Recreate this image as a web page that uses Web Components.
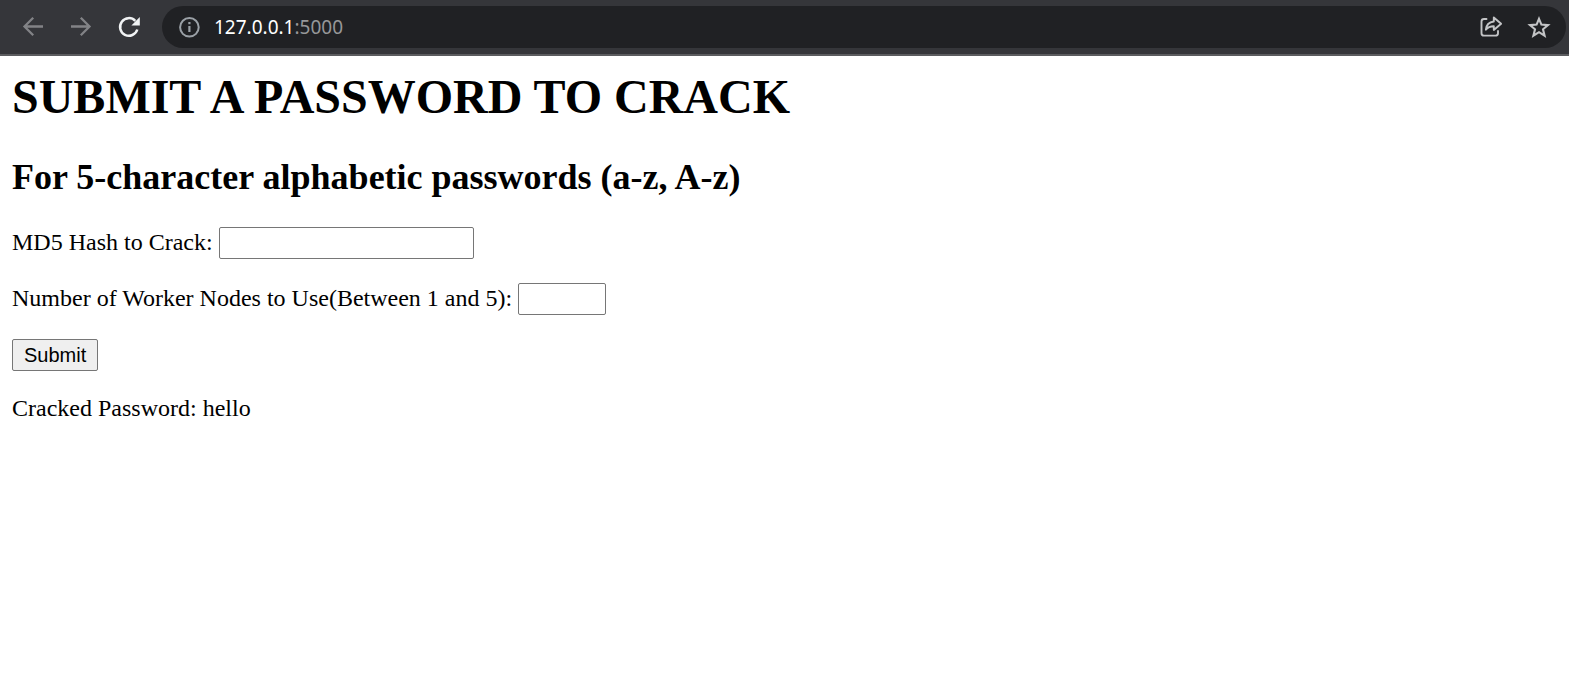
<!DOCTYPE html>
<html lang="en">
<head>
<meta charset="utf-8">
<meta name="viewport" content="width=device-width, initial-scale=1">
<title>Submit a password to crack</title>
<style>
  body { margin: 0; background: #fff; color: #000; font: 24px/26px "Liberation Serif", "Times New Roman", serif; }
</style>
</head>
<body>
<browser-bar>
  <span slot="host">127.0.0.1</span><span slot="port">:5000</span>
</browser-bar>
<crack-page>
  <span slot="title">SUBMIT A PASSWORD TO CRACK</span>
  <span slot="subtitle">For 5-character alphabetic passwords (a-z, A-z)</span>
  <crack-form></crack-form>
  <crack-result>hello</crack-result>
</crack-page>

<script>
const define = (name, html) => {
  const template = document.createElement('template');
  template.innerHTML = html;
  customElements.define(name, class extends HTMLElement {
    constructor() {
      super();
      this.attachShadow({ mode: 'open' }).append(template.content.cloneNode(true));
    }
  });
};

define('browser-bar', `
  <style>
    :host { display: flex; align-items: center; padding: 6px 3px 6px 21px; background: #35363a;
      border-bottom: 2px solid #5b5c5f; font: 19px/28px "Noto Sans", "Open Sans", sans-serif; }
    button { display: block; flex: none; width: 24px; height: 24px; padding: 0; border: 0; background: none; color: #c3c4c6; }
    button:disabled { color: #828386; }
    svg { display: block; width: 24px; height: 24px; fill: none; stroke: currentColor; stroke-width: 2; }
    nav { display: flex; gap: 24px; margin-right: 21px; }
    .reload { color: #f1f3f4; }
    .address { flex: 1; display: flex; align-items: center; box-sizing: border-box; height: 42px;
      padding: 0 15px; border-radius: 21px; background: #202124; }
    .info { color: #9aa0a6; margin-right: 13px; }
    .url { flex: 1; display: flex; color: #fff; }
    .port { color: #969799; }
    .actions { display: flex; gap: 24px; }
  </style>
  <nav aria-label="History">
    <button disabled aria-label="Back"><svg viewBox="0 0 24 24"><path stroke-width="2.300" d="M22 11.500H3.500M12.200 2.800L3.500 11.500l8.700 8.700"/></svg></button>
    <button disabled aria-label="Forward"><svg viewBox="0 0 24 24"><path stroke-width="2.300" d="M2 11.500h18.500M11.800 2.800l8.700 8.700-8.700 8.700"/></svg></button>
    <button class="reload" aria-label="Reload"><svg viewBox="0 0 24 24"><path stroke-width="2.500" d="M20.300 14.500A8.800 8.800 0 1 1 18.300 5.900"/><path d="M22.800 2v8.400h-8.400z" fill="currentColor" stroke="none"/></svg></button>
  </nav>
  <div class="address">
    <button class="info" aria-label="Site information"><svg viewBox="0 0 24 24"><circle cx="12.400" cy="12.300" r="9.300"/><path d="M12.400 11v6" stroke-width="2.200"/><path d="M12.400 7v2.200" stroke-width="2.200"/></svg></button>
    <div class="url"><slot name="host"></slot><span class="port"><slot name="port"></slot></span></div>
    <div class="actions">
      <button aria-label="Share"><svg viewBox="0 0 24 24" stroke-linejoin="round"><path stroke-width="1.900" stroke-linecap="round" d="M7.500 4H5Q2.500 4 2.500 6.500v11.700Q2.500 20.600 5 20.600h11.500Q19 20.600 19 18.200V16"/><path stroke-width="1.900" d="M14.800 2.500l7.300 6.300-7.300 6.200v-3.700c-3.700 0-6 .9-7.900 3.400.4-4.900 3.300-7.700 7.900-8.200z"/></svg></button>
      <button aria-label="Bookmark this page"><svg viewBox="0 0 24 24"><path d="M12 3.800l2.400 5.800 6.600.5-5 4.200 1.600 6.400-5.600-3.500-5.600 3.500 1.600-6.400-5-4.200 6.600-.5z" stroke-width="2.100"/></svg></button>
    </div>
  </div>
`);

define('crack-page', `
  <style>
    :host { display: block; padding: 13px 12px; }
    h1 { margin: 0 0 32px; font-size: 48px; line-height: 56px; }
    h2 { margin: 0 0 29px; font-size: 36px; line-height: 41px; }
  </style>
  <main>
    <h1><slot name="title"></slot></h1>
    <h2><slot name="subtitle"></slot></h2>
    <slot></slot>
  </main>
`);

define('crack-form', `
  <style>
    :host { display: block; }
    form, .row { display: flex; }
    form { flex-direction: column; align-items: flex-start; gap: 24px; }
    .row { align-items: baseline; gap: 6px; }
    input, button { box-sizing: border-box; height: 32px; margin: 0; border: 1px solid #767676; border-radius: 2px;
      font: 20px/24px "Liberation Sans", Arial, sans-serif; color: #000; }
    input { width: 255px; padding: 2px 3px; background: #fff; }
    input[type=number] { width: 88px; }
    button { padding: 0 11px; background: #efefef; }
  </style>
  <form onsubmit="return false">
    <div class="row"><label for="hash">MD5 Hash to Crack:</label><input id="hash" type="text"></div>
    <div class="row"><label for="nodes">Number of Worker Nodes to Use(Between 1 and 5):</label><input id="nodes" type="number" min="1" max="5"></div>
    <button type="submit">Submit</button>
  </form>
`);

define('crack-result', `
  <style>
    :host { display: block; margin-top: 24px; }
    p { margin: 0; }
  </style>
  <p>Cracked Password: <slot></slot></p>
`);
</script>
</body>
</html>
